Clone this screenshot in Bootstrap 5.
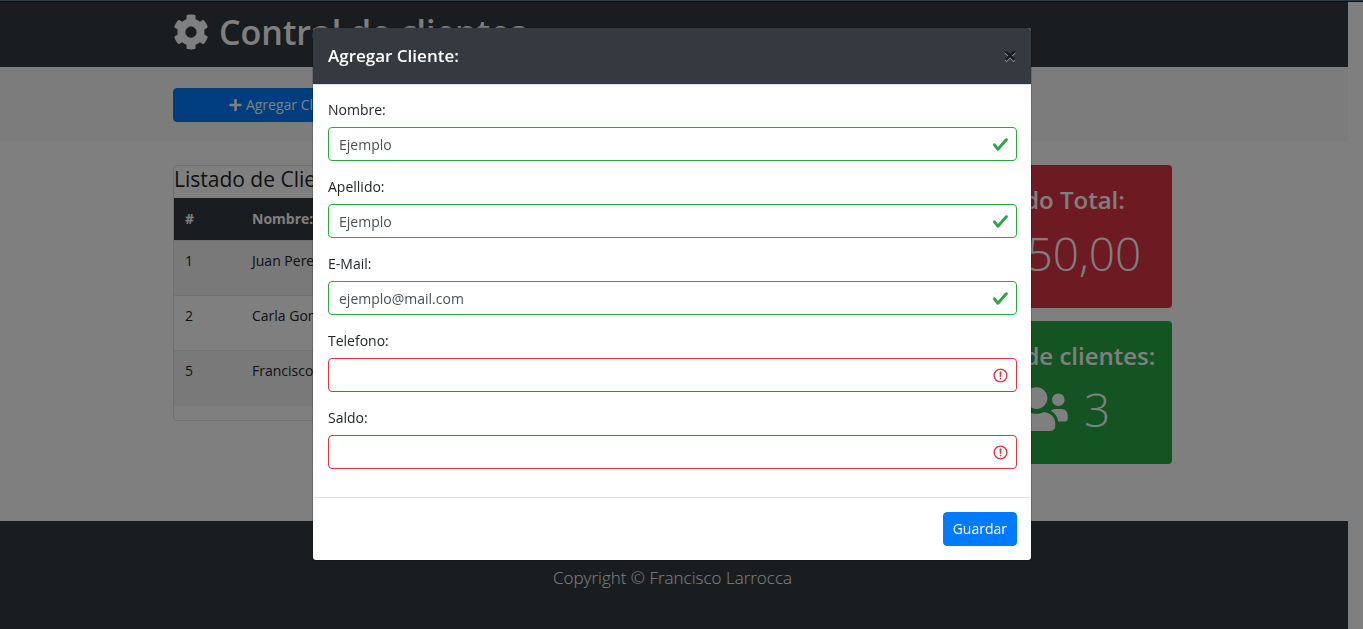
<!DOCTYPE html>
<html lang="es">
<head>
<meta charset="utf-8">
<meta name="viewport" content="width=device-width, initial-scale=1">
<title>Control de clientes</title>
<link rel="stylesheet" href="https://cdn.jsdelivr.net/npm/bootstrap@5.3.0/dist/css/bootstrap.min.css">
<style>
  :root { --bs-body-font-family: "Open Sans", "Noto Sans", sans-serif; }
  body { font-size: 14px; line-height: 22px; color: #212529; padding: 2px 15px 0 0; overflow: hidden; }
  .top-strip { height: 2px; background: #2a3b48; border-bottom: 1px solid #0c1013; z-index: 1070; }
  .band { padding-right: 3px; }
  .page-box { max-width: 1027px; padding: 0 14px; }
  .page-box > .row { --bs-gutter-x: 28px; }
  .slate { background: #343a40; color: #fff; }
  .bg-actions { background: #f8f9fa; padding-top: 21px; padding-bottom: 20px; margin-bottom: 23px; }
  .brand-head { height: 65px; }
  h1 { font-size: 34px; line-height: 42px; font-weight: 600; margin: 0; padding-bottom: 6px; }
  h1 svg { width: 36px; height: 36px; margin-right: 10px; }
  svg { fill: currentColor; }
  .btn { --bs-btn-font-size: 14px; --bs-btn-line-height: 22px; --bs-btn-padding-y: 5px; --bs-btn-padding-x: 9px; --bs-btn-border-radius: 4px; }
  .btn-primary { --bs-btn-bg: #007bff; --bs-btn-border-color: #007bff; }
  .btn svg { width: 13px; height: 14px; }
  .card { --bs-card-border-radius: 4px; --bs-card-inner-border-radius: 3px; --bs-card-border-color: #dfdfdf; }
  .card h2 { font-size: 21px; line-height: 25px; font-weight: 500; margin: 1px 0 6px; }
  .table { --bs-table-striped-bg: #f2f2f2; margin-bottom: 14px; border-color: #dee2e6; }
  .table th, .table td { padding: 10px 11px; border-bottom: 0; }
  .table td { border-top: 1px solid #dee2e6; height: 55px; padding-top: 9px; }
  .table thead th { background: #343a40; color: #fff; height: 42px; }
  .table th:first-child { width: 67px; }
  .stat { color: #fff; border-color: transparent; height: 143px; margin-bottom: 13px; padding: 18px 0; white-space: nowrap; }
  .stat h3 { font-size: 24px; line-height: 31px; font-weight: 600; margin-bottom: 8px; }
  .stat p { font-size: 46px; line-height: 60px; font-weight: 300; margin: 0; }
  .stat svg { width: 63px; height: 50px; }
  .stat-red { background: #dc3545; }
  .stat-green { background: #28a745; }
  .site-foot { margin-top: 44px; padding-top: 43px; padding-bottom: 43px; }
  .site-foot p { font-size: 17px; line-height: 27px; font-weight: 300; margin-bottom: 14px; }
  .modal { padding-right: 19px; }
  .modal-dialog { max-width: 720px; margin-top: 27px; }
  .modal-content { border-radius: 4px; }
  .modal-header { background: #343a40; color: #fff; height: 57px; padding: 0 14px 2px 15px; border-radius: 3px 3px 0 0; }
  .modal-title { font-size: 17px; line-height: 27px; font-weight: 600; }
  .close-x { color: #000; background: none; border: 0; padding: 0; font: 700 24px/24px "Open Sans", sans-serif; text-shadow: 0 1px 0 #fff; opacity: .5; }
  .modal-body { padding: 14px 14px 13px 15px; }
  .field { margin-bottom: 15px; }
  .form-label { margin-bottom: 6px; display: block; }
  .form-control { font-size: 14px; line-height: 22px; height: 34px; padding: 5px 10px; border-radius: 4px; color: #495057; }
  .form-control.is-valid, .form-control.is-invalid { background-size: 17px 17px; background-position: right 7px center; }
  .form-control.is-valid { border-color: #28a745; background-image: url("data:image/svg+xml,%3csvg xmlns='http://www.w3.org/2000/svg' viewBox='0 0 8 8'%3e%3cpath fill='%2328a745' d='M2.3 6.73L.6 4.53c-.4-1.04.46-1.4 1.1-.8l1.1 1.4 3.4-3.8c.6-.63 1.6-.27 1.2.7l-4 4.6c-.43.5-.8.4-1.1.1z'/%3e%3c/svg%3e"); }
  .form-control.is-invalid { border-color: #dc3545; background-image: url("data:image/svg+xml,%3csvg xmlns='http://www.w3.org/2000/svg' viewBox='0 0 12 12' fill='none' stroke='%23dc3545'%3e%3ccircle cx='6' cy='6' r='4.5'/%3e%3cpath stroke-linejoin='round' d='M5.8 3.6h.4L6 6.5z'/%3e%3ccircle cx='6' cy='8.2' r='.6' fill='%23dc3545' stroke='none'/%3e%3c/svg%3e"); }
  .modal-footer { padding: 14px; }
  .modal-footer > * { margin: 0; }
</style>
</head>
<body class="modal-open">
<div class="top-strip fixed-top"></div>

<header class="band slate brand-head d-flex align-items-center">
  <div class="container page-box">
    <h1 class="d-flex align-items-center"><svg viewBox="0 0 512 512" aria-hidden="true"><path d="M487.4 315.7l-42.6-24.6c4.3-23.2 4.3-47 0-70.2l42.6-24.6c4.9-2.8 7.1-8.6 5.5-14-11.1-35.6-30-67.8-54.7-94.6-3.8-4.1-10-5.1-14.8-2.3L380.8 110c-17.9-15.4-38.5-27.3-60.8-35.1V25.8c0-5.6-3.9-10.5-9.4-11.7-36.7-8.2-74.3-7.8-109.2 0-5.5 1.2-9.4 6.1-9.4 11.7V75c-22.2 7.9-42.8 19.8-60.8 35.1L88.7 85.5c-4.9-2.8-11-1.9-14.8 2.3-24.7 26.7-43.6 58.9-54.7 94.6-1.7 5.4.6 11.2 5.5 14L67.3 221c-4.3 23.2-4.3 47 0 70.2l-42.6 24.6c-4.9 2.8-7.1 8.6-5.5 14 11.1 35.6 30 67.8 54.7 94.6 3.8 4.1 10 5.1 14.8 2.3l42.6-24.6c17.9 15.4 38.5 27.3 60.8 35.1v49.2c0 5.6 3.9 10.5 9.4 11.7 36.7 8.2 74.3 7.8 109.2 0 5.5-1.2 9.4-6.1 9.4-11.7v-49.2c22.2-7.9 42.8-19.8 60.8-35.1l42.6 24.6c4.9 2.8 11 1.9 14.8-2.3 24.7-26.7 43.6-58.9 54.7-94.6 1.5-5.5-.7-11.3-5.6-14.1zM256 336c-44.1 0-80-35.9-80-80s35.9-80 80-80 80 35.9 80 80-35.9 80-80 80z"/></svg>Control de clientes</h1>
  </div>
</header>

<section class="band bg-actions">
  <div class="container page-box">
    <div class="row">
      <div class="col-md-3">
        <button type="button" class="btn btn-primary w-100 d-flex justify-content-center align-items-center gap-1"><svg viewBox="0 0 448 512" aria-hidden="true"><path d="M416 208H272V64c0-17.67-14.33-32-32-32h-32c-17.67 0-32 14.33-32 32v144H32c-17.67 0-32 14.33-32 32v32c0 17.67 14.33 32 32 32h144v144c0 17.67 14.33 32 32 32h32c17.67 0 32-14.33 32-32V304h144c17.67 0 32-14.33 32-32v-32c0-17.67-14.33-32-32-32z"/></svg>Agregar Cliente</button>
      </div>
    </div>
  </div>
</section>

<main class="band">
  <div class="container page-box">
    <div class="row">
      <div class="col-md-9">
        <div class="card">
          <h2>Listado de Clientes</h2>
          <table class="table table-striped">
            <thead><tr><th>#</th><th>Nombre:</th><th>Saldo:</th></tr></thead>
            <tbody>
              <tr><td>1</td><td>Juan Perez</td><td></td></tr>
              <tr><td>2</td><td>Carla Gomez</td><td></td></tr>
              <tr><td>5</td><td>Francisco Larrocca</td><td></td></tr>
            </tbody>
          </table>
        </div>
      </div>
      <div class="col-md-3">
        <div class="card stat stat-red text-center">
          <h3>Saldo Total:</h3>
          <p>$550,00</p>
        </div>
        <div class="card stat stat-green text-center">
          <h3>Total de clientes:</h3>
          <p class="d-flex justify-content-center align-items-center"><svg class="me-3" viewBox="0 0 640 512" aria-hidden="true"><path d="M96 224c35.3 0 64-28.7 64-64s-28.7-64-64-64-64 28.7-64 64 28.7 64 64 64zm448 0c35.3 0 64-28.7 64-64s-28.7-64-64-64-64 28.7-64 64 28.7 64 64 64zm32 32h-64c-17.6 0-33.5 7.1-45.1 18.6 40.3 22.1 68.9 62 75.1 109.4h66c17.7 0 32-14.3 32-32v-32c0-35.3-28.7-64-64-64zm-256 0c61.9 0 112-50.1 112-112S381.9 32 320 32 208 82.1 208 144s50.1 112 112 112zm76.8 32h-8.3c-20.8 10-43.9 16-68.5 16s-47.6-6-68.5-16h-8.3C179.6 288 128 339.6 128 403.2V432c0 26.5 21.5 48 48 48h288c26.5 0 48-21.5 48-48v-28.8c0-63.6-51.6-115.2-115.2-115.2zm-223.7-13.4C161.5 263.1 145.6 256 128 256H64c-35.3 0-64 28.7-64 64v32c0 17.7 14.3 32 32 32h65.9c6.3-47.4 34.9-87.3 75.2-109.4z"/></svg>3</p>
        </div>
      </div>
    </div>
  </div>
</main>

<footer class="band slate site-foot text-center">
  <p>Copyright © Francisco Larrocca</p>
</footer>

<div class="modal-backdrop show"></div>
<div class="modal show d-block" tabindex="-1" role="dialog" aria-modal="true" aria-labelledby="titulo">
  <div class="modal-dialog">
    <form class="modal-content" novalidate>
      <div class="modal-header">
        <h5 class="modal-title" id="titulo">Agregar Cliente:</h5>
        <button type="button" class="close-x" aria-label="Cerrar">×</button>
      </div>
      <div class="modal-body">
        <div class="field"><label class="form-label" for="nombre">Nombre:</label><input class="form-control is-valid" id="nombre" type="text" value="Ejemplo"></div>
        <div class="field"><label class="form-label" for="apellido">Apellido:</label><input class="form-control is-valid" id="apellido" type="text" value="Ejemplo"></div>
        <div class="field"><label class="form-label" for="email">E-Mail:</label><input class="form-control is-valid" id="email" type="email" value="ejemplo@mail.com"></div>
        <div class="field"><label class="form-label" for="telefono">Telefono:</label><input class="form-control is-invalid" id="telefono" type="tel"></div>
        <div class="field"><label class="form-label" for="saldo">Saldo:</label><input class="form-control is-invalid" id="saldo" type="number"></div>
      </div>
      <div class="modal-footer">
        <button type="submit" class="btn btn-primary">Guardar</button>
      </div>
    </form>
  </div>
</div>
<script src="https://cdn.jsdelivr.net/npm/bootstrap@5.3.0/dist/js/bootstrap.bundle.min.js"></script>
</body>
</html>
